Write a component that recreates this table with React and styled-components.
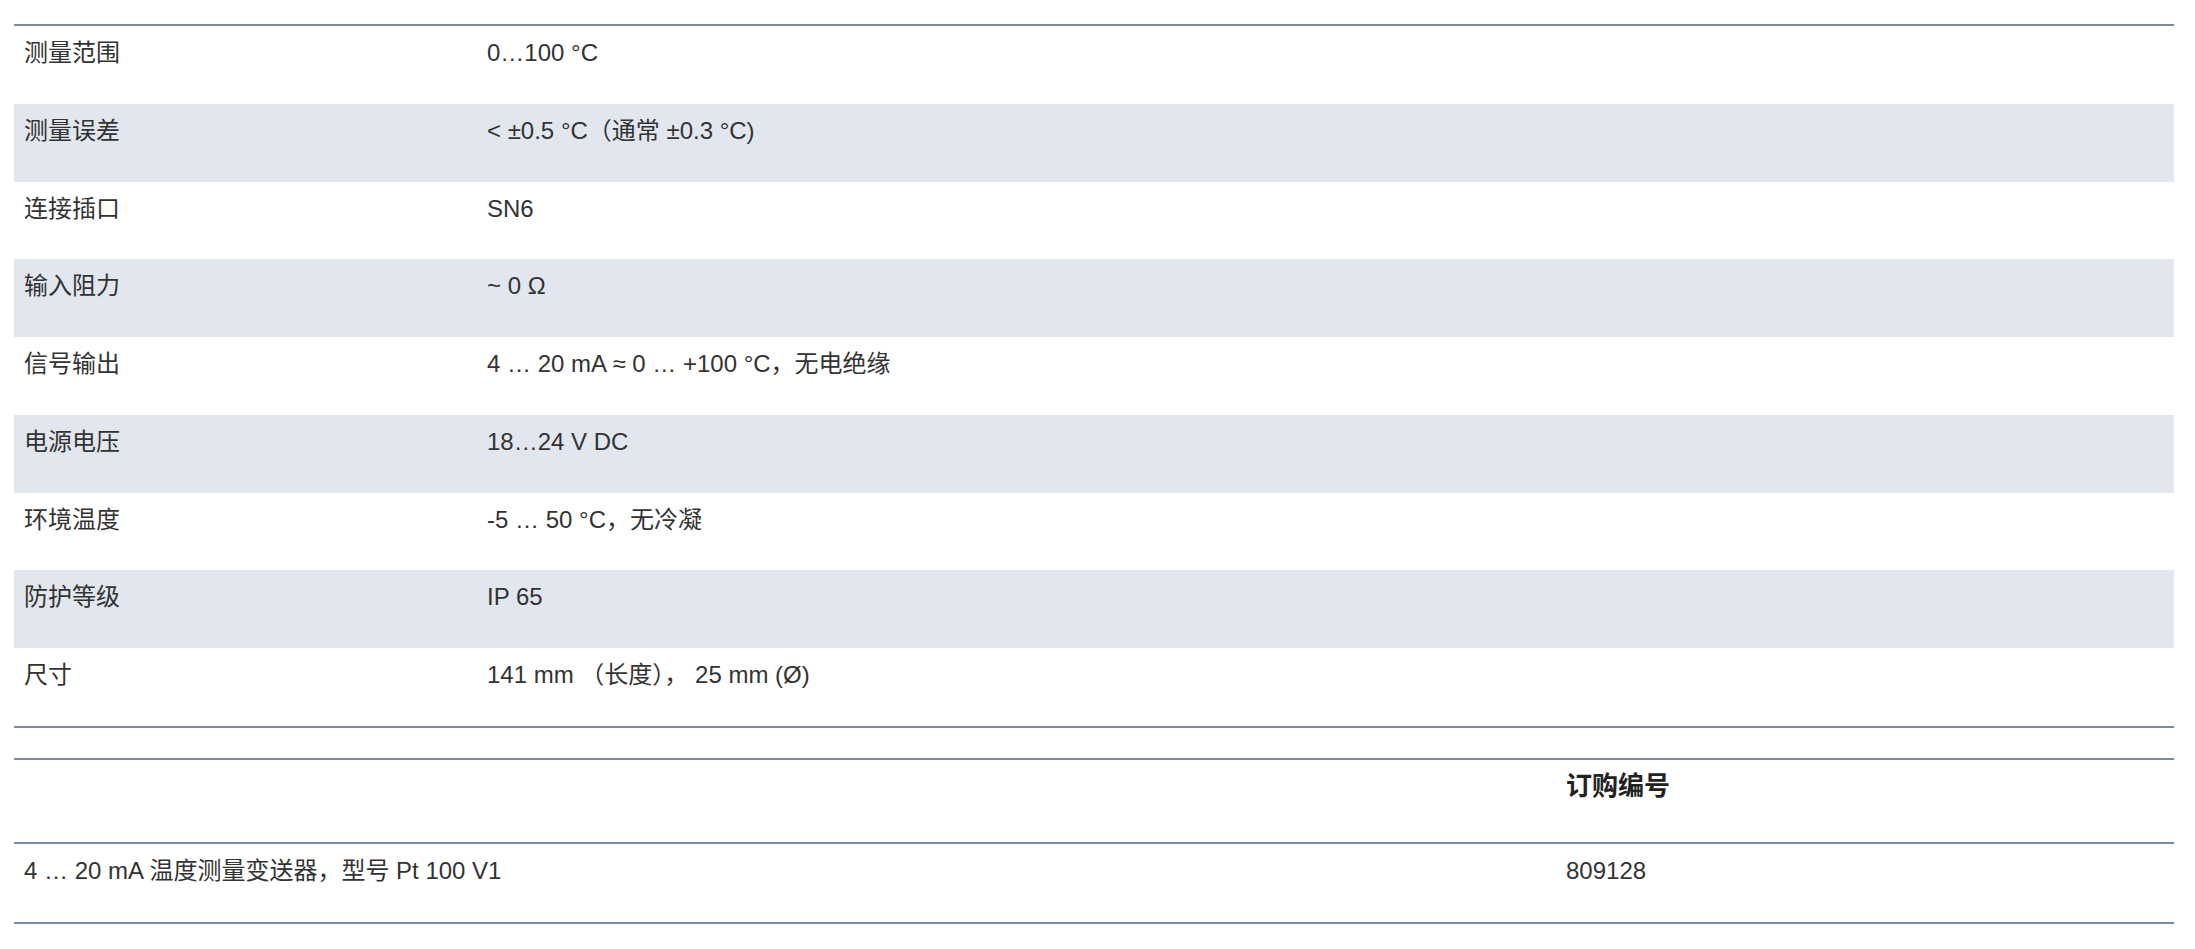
import React from "react";
import styled, { createGlobalStyle } from "styled-components";

const Global = createGlobalStyle`
  html, body { margin: 0; padding: 0; background: #ffffff; }
  body {
    font-family: "Liberation Sans", Arial, "Noto Sans CJK SC", sans-serif;
    color: #333333;
  }
`;

const Page = styled.div`
  width: 2160px;
  padding: 24px 0 0 14px;
`;

const Table = styled.div`
  display: grid;
  grid-template-columns: ${(p) => p.$cols};
  border-top: 2px solid #7a8aa1;
  border-bottom: 2px solid #7a8aa1;
  margin-bottom: ${(p) => p.$gap || 0}px;
`;

const Row = styled.div`
  display: contents;
`;

const Cell = styled.div`
  height: ${(p) => p.$h}px;
  box-sizing: border-box;
  padding: ${(p) => (p.$bold ? "8px" : "9px")} 10px 0 10px;
  font-size: ${(p) => (p.$bold ? "26px" : "24px")};
  line-height: 36px;
  font-weight: ${(p) => (p.$bold ? 700 : 400)};
  color: ${(p) => (p.$bold ? "#222222" : "#333333")};
  background: ${(p) => (p.$striped ? "#e1e6ef" : "transparent")};
  border-bottom: ${(p) => (p.$divider ? "2px solid #7a8aa1" : "none")};
  white-space: nowrap;
`;

const specs = [
  ["测量范围", "0…100 °C"],
  ["测量误差", "< ±0.5 °C（通常 ±0.3 °C)"],
  ["连接插口", "SN6"],
  ["输入阻力", "~ 0 Ω"],
  ["信号输出", "4 … 20 mA ≈ 0 … +100 °C，无电绝缘"],
  ["电源电压", "18…24 V DC"],
  ["环境温度", "-5 … 50 °C，无冷凝"],
  ["防护等级", "IP 65"],
  ["尺寸", "141 mm （长度）， 25 mm (Ø)"],
];

export default function App() {
  return (
    <>
      <Global />
      <Page>
        <Table $cols="463px 1fr" $gap={30}>
          {specs.map(([k, v], i) => (
            <Row key={k}>
              <Cell $h={77.78} $striped={i % 2 === 1}>{k}</Cell>
              <Cell $h={77.78} $striped={i % 2 === 1}>{v}</Cell>
            </Row>
          ))}
        </Table>
        <Table $cols="1542px 1fr">
          <Row>
            <Cell $h={84} $divider />
            <Cell $h={84} $divider $bold>订购编号</Cell>
          </Row>
          <Row>
            <Cell $h={78}>4 … 20 mA 温度测量变送器，型号 Pt 100 V1</Cell>
            <Cell $h={78}>809128</Cell>
          </Row>
        </Table>
      </Page>
    </>
  );
}
